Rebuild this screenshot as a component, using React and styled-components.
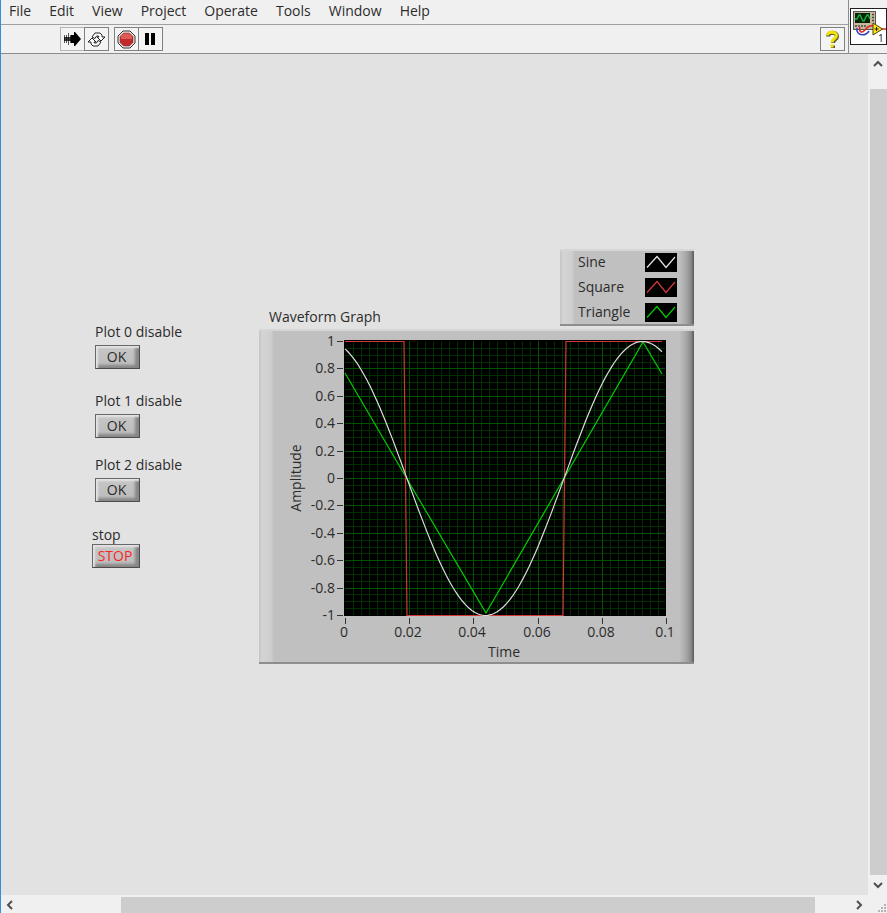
import React from "react";
import styled, { createGlobalStyle } from "styled-components";

const GlobalStyle = createGlobalStyle`
  *, *::before, *::after { box-sizing: border-box; }
  body { margin: 0; background: #e2e2e2; }
  button { font: inherit; color: inherit; margin: 0; padding: 0; border: 0; background: none; }
  svg { display: block; }
`;

const Window = styled.div`
  display: flex;
  flex-direction: column;
  min-height: 100vh;
  border-left: 1px solid #2f8fe0;
  background: #e2e2e2;
  color: #2c2c2c;
  font-family: "Open Sans", "Noto Sans", sans-serif;
  font-size: 14px;
  line-height: 18px;
`;

const Header = styled.header`
  display: flex;
  height: 54px;
  background: #f0f0f0;
  border-bottom: 1px solid #8c8c8c;
`;

const Bars = styled.div`
  flex: 1;
  min-width: 0;
  display: flex;
  flex-direction: column;
`;

const MenuBar = styled.nav`
  display: flex;
  align-items: center;
  gap: 18px;
  height: 25px;
  padding: 0 8px 2px;
  border-bottom: 1px solid #a0a0a0;
`;

const MenuItem = styled.button`
  white-space: nowrap;
`;

const Toolbar = styled.div`
  flex: 1;
  display: flex;
  align-items: center;
  justify-content: space-between;
  padding: 0 3px 0 59px;
`;

const ToolGroups = styled.div`
  display: flex;
  gap: 5px;
`;

const ToolGroup = styled.div`
  display: flex;
`;

const ToolButton = styled.button`
  display: grid;
  place-items: center;
  width: 25px;
  height: 24px;
  background: #f4f4f4;
  border: 1px solid ${(p) => (p.$soft ? "#b4b4b4" : "#808080")};

  & + & { margin-left: -1px; }
`;

const IconPane = styled.div`
  width: 39px;
  padding: 8px 0 0 1px;
  border-left: 1px solid #8c8c8c;
`;

const ViIcon = styled.button`
  display: block;
  width: 37px;
  height: 37px;
  background: #ffffff;
  border: 1px solid #202020;
`;

const Workspace = styled.div`
  flex: 1;
  display: grid;
  grid-template-columns: minmax(0, 1fr) 19px;
  grid-template-rows: 1fr 18px;
`;

const FrontPanel = styled.main`
  display: flex;
  align-items: flex-start;
  gap: 75px;
  padding: 195px 20px 20px 91px;
  overflow: hidden;
`;

const Controls = styled.div`
  flex: none;
  width: 92px;
  padding-top: 74px;
`;

const Control = styled.div`
  display: flex;
  flex-direction: column;
  align-items: flex-start;
  gap: ${(p) => (p.$stop ? 0 : 4)}px;
  margin-top: ${(p) => p.$space}px;
  padding-left: ${(p) => (p.$stop ? 0 : 3)}px;
`;

const Label = styled.label`
  white-space: nowrap;
`;

const PanelButton = styled.button`
  width: ${(p) => (p.$stop ? 48 : 45)}px;
  height: 24px;
  padding-right: 2px;
  color: ${(p) => (p.$stop ? "#ff2424" : "#2c2c2c")};
  background: linear-gradient(#c6c6c6, #bcbcbc);
  border: 1px solid #686868;
  border-right-color: #4c4c4c;
  border-bottom-color: #4c4c4c;
  box-shadow: inset 2px 2px 2px #e4e4e4, inset -4px -3px 3px #868686;
`;

const Indicator = styled.section`
  flex: none;
  display: flex;
  flex-direction: column;
  width: 435px;
`;

const Bevel = styled.div`
  background: linear-gradient(90deg, #c4c4c4 0, #d4d4d4 3px, #cecece 12px, #c0c0c0 15px,
    #c0c0c0 calc(100% - 15px), #a8a8a8 calc(100% - 8px), #8a8a8a calc(100% - 3px), #585858 100%);
  border-top: 2px solid #d6d6d6;
  border-bottom: 2px solid #8e8e8e;
`;

const Legend = styled(Bevel)`
  align-self: flex-end;
  display: flex;
  flex-direction: column;
  gap: 5px;
  width: 134px;
  height: 77px;
  padding: 1px 17px 0 18px;
`;

const LegendRow = styled.div`
  display: flex;
  align-items: center;
  justify-content: space-between;
  height: 20px;
`;

const GraphTitle = styled.h1`
  margin: -18px 0 3px 10px;
  font-size: 14px;
  line-height: 18px;
  font-weight: 400;
`;

const Graph = styled(Bevel)`
  height: 335px;
`;

const ChartText = styled.text`
  fill: #2c2c2c;
  font-size: 14px;
`;

const TerminalText = styled.text`
  fill: #202020;
  font-size: 10px;
`;

const Track = styled.div`
  display: flex;
  flex-direction: ${(p) => (p.$vertical ? "column" : "row")};
  background: #f0f0f0;
  padding: ${(p) => (p.$vertical ? "0 0 0 2px" : "2px 0 0")};
`;

const Thumb = styled.div`
  flex: ${(p) => p.$grow};
  background: #cdcdcd;
`;

const Spacer = styled.div`
  flex: ${(p) => p.$grow};
`;

const ArrowButton = styled.button`
  flex: none;
  display: grid;
  place-items: center;
  width: ${(p) => (p.$vertical ? 16 : 18)}px;
  height: ${(p) => (p.$vertical ? 20 : 16)}px;
`;

const Corner = styled.div`
  display: flex;
  align-items: flex-end;
  justify-content: flex-end;
  background: #f0f0f0;
`;

const menus = ["File", "Edit", "View", "Project", "Operate", "Tools", "Window", "Help"];

const plots = [
  { name: "Sine", color: "#e8e8e8" },
  { name: "Square", color: "#d83838" },
  { name: "Triangle", color: "#00d000" },
];

const controls = [
  { id: "plot0", label: "Plot 0 disable", text: "OK", space: 0 },
  { id: "plot1", label: "Plot 1 disable", text: "OK", space: 23 },
  { id: "plot2", label: "Plot 2 disable", text: "OK", space: 18 },
  { id: "stop", label: "stop", text: "STOP", space: 24, stop: true },
];

function RunIcon() {
  return (
    <svg width="19" height="16" viewBox="0 0 19 16">
      <path d="M1.500 4v8M3.500 4v8M5.500 2v12M7.500 4v8" stroke="#555" />
      <path d="M8 4h3V1h1l6 7-6 7h-1v-3H8z" fill="#000" />
      <path d="M1 6h9v4H1z" fill="#000" fillOpacity=".75" />
    </svg>
  );
}

function RunLoopIcon() {
  const arrow = "M5 6 8 2H13L15 4V6H18L14 10 10 6H12L11.500 5H9.500L8 7.500Z";
  return (
    <svg width="19" height="17" viewBox="0 0 19 17" fill="#fff" stroke="#222" strokeLinejoin="round">
      <path d={arrow} />
      <path d={arrow} transform="rotate(180 9.500 8.500)" />
    </svg>
  );
}

function AbortIcon() {
  return (
    <svg width="19" height="19" viewBox="0 0 19 19">
      <path d="M6 1h7l5 5v7l-5 5H6l-5-5V6z" fill="#eee" stroke="#333" />
      <path d="M6.500 3h6L16 6.500v6L12.500 16h-6L3 12.500v-6z" fill="#c02a2a" stroke="#8a3030" strokeWidth=".6" />
      <path d="M6.500 3.500h6L15 6v3H4V6z" fill="#dc5c58" />
    </svg>
  );
}

function PauseIcon() {
  return (
    <svg width="13" height="12" viewBox="0 0 13 12">
      <path d="M1 0h4v12H1zM7 0h4v12H7z" fill="#000" />
    </svg>
  );
}

function HelpIcon() {
  return (
    <svg width="15" height="19" viewBox="0 0 15 19" fill="none">
      <path d="M3 6.500C3 1.500 12 1.500 12 6.500 12 9.500 8 9.500 8 13M8 15.500V18" stroke="#55553c" strokeWidth="4" />
      <path d="M2.500 5.500C2.500 1 11.500 1 11.500 5.500 11.500 8.500 7 8.500 7 12.500M7 14.500V17.500" stroke="#f2e200" strokeWidth="3" />
    </svg>
  );
}

function InstrumentIcon() {
  return (
    <svg width="35" height="35" viewBox="0 0 35 35">
      <rect x="2.500" y="2.500" width="22" height="18" fill="#c6b99c" stroke="#555" />
      <rect x="4" y="4" width="15" height="10" fill="#06220a" />
      <path d="M4 10h2L8 6h1l3 6h1l3-6h1l2 4" fill="none" stroke="#18b838" strokeWidth="1.400" />
      <path d="M21 5.500h3M21 8.500h3M21 11.500h3M4 17h12" stroke="#444" strokeWidth="1.500" strokeDasharray="2 1" />
      <path d="M6 19v3c2 5 9 5 12 0" fill="none" stroke="#3344c0" strokeWidth="1.600" />
      <path d="M9 18c-1 3 0 5 2 5s3-3 6-5 4-1 5-1M31 20h4" fill="none" stroke="#e02828" strokeWidth="1.600" />
      <path d="M22 14 31.500 20 22 26z" fill="#ffe21a" stroke="#4c4200" />
      <path d="M23.500 20h4M25.500 18v4" stroke="#222" />
      <TerminalText x="27" y="33">1</TerminalText>
    </svg>
  );
}

function Swatch({ color }) {
  return (
    <svg width="32" height="19" viewBox="0 0 32 19">
      <rect width="32" height="19" fill="#000" />
      <path d="M2 14.500 12 3.500 21 14.500 30 4" fill="none" stroke={color} strokeWidth="1.200" />
    </svg>
  );
}

const chevrons = {
  up: "M2 8 6 4 10 8",
  down: "M2 4 6 8 10 4",
  left: "M8 2 4 6 8 10",
  right: "M4 2 8 6 4 10",
};

function Chevron({ direction }) {
  return (
    <svg width="12" height="12" viewBox="0 0 12 12">
      <path d={chevrons[direction]} fill="none" stroke="#505050" strokeWidth="2" />
    </svg>
  );
}

function Grip() {
  const dots = [[9, 1], [6, 4], [9, 4], [3, 7], [6, 7], [9, 7]];
  return (
    <svg width="12" height="10" viewBox="0 0 12 10">
      {dots.map(([x, y]) => (
        <rect key={`${x}-${y}`} x={x} y={y} width="2" height="2" fill="#b4b4b4" />
      ))}
    </svg>
  );
}

const LEFT = 86;
const TOP = 10;
const W = 321;
const H = 274;
const HALF_PERIOD = 157;
const FIRST_ZERO = 62;
const LAST_SAMPLE = 317;

const yOf = (v) => TOP + ((1 - v) * H) / 2;

function sinePath() {
  const points = [];
  for (let i = 0; i <= 100; i += 1) {
    const x = (i * LAST_SAMPLE) / 100;
    const v = Math.sin(((FIRST_ZERO - x) / HALF_PERIOD) * Math.PI);
    points.push(`${(LEFT + x).toFixed(1)},${(yOf(v) + 0.5).toFixed(1)}`);
  }
  return points.join(" ");
}

const yTicks = [1, 0.8, 0.6, 0.4, 0.2, 0, -0.2, -0.4, -0.6, -0.8, -1];
const xTicks = [0, 0.02, 0.04, 0.06, 0.08, 0.1];
const gridSteps = Array.from({ length: 39 }, (_, i) => i + 1);

function GridLine({ step, major }) {
  const x = Math.round(LEFT + (step * W) / 40);
  const y = Math.round(TOP + (step * H) / 40);
  const dark = "#002e00";
  const bright = "#005400";
  return (
    <>
      {(step % 8 === 0) === major && (
        <line x1={x} x2={x} y1={TOP} y2={TOP + H} stroke={major ? bright : dark} />
      )}
      {(step % 4 === 0) === major && (
        <line x1={LEFT} x2={LEFT + W - 1} y1={y} y2={y} stroke={major ? bright : dark} />
      )}
    </>
  );
}

function WaveformChart() {
  return (
    <svg width="435" height="331" viewBox="0 0 435 331" role="img" aria-label="Waveform Graph">
      <rect x={LEFT - 1} y={TOP - 1} width={W + 1} height={H + 2} fill="#000" />
      <g shapeRendering="crispEdges">
        {gridSteps.map((s) => <GridLine key={s} step={s} major={false} />)}
        {gridSteps.map((s) => <GridLine key={s} step={s} major />)}
        {yTicks.map((v) => (
          <line key={v} x1={LEFT - 8} x2={LEFT - 2} y1={Math.round(yOf(v))} y2={Math.round(yOf(v))} stroke="#333" />
        ))}
        {xTicks.map((t) => {
          const x = Math.round(LEFT + t * W * 10);
          return <line key={t} x1={x} x2={x} y1={TOP + H + 3} y2={TOP + H + 9} stroke="#333" />;
        })}
      </g>
      {yTicks.map((v) => (
        <ChartText key={v} x={LEFT - 10} y={Math.round(yOf(v)) + 5} textAnchor="end">{v}</ChartText>
      ))}
      {xTicks.map((t) => (
        <ChartText key={t} x={Math.round(LEFT + t * W * 10) - 1} y={TOP + H + 22} textAnchor="middle">{t}</ChartText>
      ))}
      <ChartText x="245" y="326" textAnchor="middle">Time</ChartText>
      <ChartText transform="translate(42 147) rotate(-90)" textAnchor="middle">Amplitude</ChartText>
      <g fill="none" strokeWidth="1.200">
        <polyline points="86,42 148,148 227,282 384,11 403,43" stroke="#00cc00" />
        <polyline points="86,10.500 145,10.500 148,284.500 304,284.500 307,10.500 403,10.500" stroke="#d03838" />
        <polyline points={sinePath()} stroke="#dcdcdc" />
      </g>
    </svg>
  );
}

export default function App() {
  return (
    <Window>
      <GlobalStyle />
      <Header>
        <Bars>
          <MenuBar aria-label="Main menu">
            {menus.map((m) => <MenuItem key={m} type="button">{m}</MenuItem>)}
          </MenuBar>
          <Toolbar>
            <ToolGroups>
              <ToolGroup>
                <ToolButton type="button" aria-label="Run" $soft><RunIcon /></ToolButton>
                <ToolButton type="button" aria-label="Run continuously"><RunLoopIcon /></ToolButton>
              </ToolGroup>
              <ToolGroup>
                <ToolButton type="button" aria-label="Abort"><AbortIcon /></ToolButton>
                <ToolButton type="button" aria-label="Pause"><PauseIcon /></ToolButton>
              </ToolGroup>
            </ToolGroups>
            <ToolButton type="button" aria-label="Context help"><HelpIcon /></ToolButton>
          </Toolbar>
        </Bars>
        <IconPane>
          <ViIcon type="button" aria-label="Instrument icon"><InstrumentIcon /></ViIcon>
        </IconPane>
      </Header>
      <Workspace>
        <FrontPanel>
          <Controls>
            {controls.map((c) => (
              <Control key={c.id} $space={c.space} $stop={c.stop}>
                <Label htmlFor={c.id}>{c.label}</Label>
                <PanelButton id={c.id} type="button" $stop={c.stop}>{c.text}</PanelButton>
              </Control>
            ))}
          </Controls>
          <Indicator>
            <Legend>
              {plots.map((p) => (
                <LegendRow key={p.name}>
                  <span>{p.name}</span>
                  <Swatch color={p.color} />
                </LegendRow>
              ))}
            </Legend>
            <GraphTitle>Waveform Graph</GraphTitle>
            <Graph><WaveformChart /></Graph>
          </Indicator>
        </FrontPanel>
        <Track $vertical>
          <ArrowButton type="button" aria-label="Scroll up" $vertical><Chevron direction="up" /></ArrowButton>
          <Spacer $grow={15} />
          <Thumb $grow={787} />
          <ArrowButton type="button" aria-label="Scroll down" $vertical><Chevron direction="down" /></ArrowButton>
        </Track>
        <Track>
          <ArrowButton type="button" aria-label="Scroll left"><Chevron direction="left" /></ArrowButton>
          <Spacer $grow={102} />
          <Thumb $grow={693} />
          <Spacer $grow={35} />
          <ArrowButton type="button" aria-label="Scroll right"><Chevron direction="right" /></ArrowButton>
        </Track>
        <Corner><Grip /></Corner>
      </Workspace>
    </Window>
  );
}
